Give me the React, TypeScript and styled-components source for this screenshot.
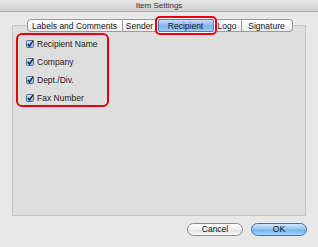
import styled, { createGlobalStyle } from "styled-components";

const GlobalStyle = createGlobalStyle`
  html, body {
    margin: 0;
    padding: 0;
    background: #e8e8e8;
  }
  body {
    font-family: "Liberation Sans", Arial, sans-serif;
  }
`;

const tabs = [
  { label: "Labels and Comments", width: 96 },
  { label: "Sender", width: 35 },
  { label: "Recipient", width: 56 },
  { label: "Logo", width: 28 },
  { label: "Signature", width: 51 },
];
const fields = ["Recipient Name", "Company", "Dept./Div.", "Fax Number"];

const CheckIcon = () => (
  <svg width="8" height="8" viewBox="0 0 8 8">
    <defs>
      <linearGradient id="cb" x1="0" y1="0" x2="0" y2="1">
        <stop offset="0" stopColor="#d6e8fb" />
        <stop offset="1" stopColor="#7fb0e8" />
      </linearGradient>
    </defs>
    <rect x="0.5" y="0.5" width="7" height="7" rx="1" fill="url(#cb)" stroke="#4f73a8" />
    <path d="M1.7 3.9 L3.4 6 L7.2 0.6" fill="none" stroke="#14284a" strokeWidth="1.4" />
  </svg>
);

const App = () => {
  return (
    <>
      <GlobalStyle />
      <Window>
        <TitleBar>Item Settings</TitleBar>
        <Body>
          <TabRow>
            {tabs.map((t) => (
              <Tab key={t.label} $active={t.label === "Recipient"} style={{ width: t.width }}>
                {t.label}
              </Tab>
            ))}
          </TabRow>
          <GroupBox>
            <FieldList>
              {fields.map((f) => (
                <FieldRow key={f}>
                  <CheckIcon />
                  <span>{f}</span>
                </FieldRow>
              ))}
            </FieldList>
          </GroupBox>
          <Buttons>
            <Button>Cancel</Button>
            <Button $primary>OK</Button>
          </Buttons>
        </Body>
      </Window>
    </>
  );
};

const Window = styled.div`
  width: 318px;
  height: 247px;
  background: #e8e8e8;
  display: flex;
  flex-direction: column;
  overflow: hidden;
`;

const TitleBar = styled.div`
  height: 11px;
  line-height: 12px;
  text-align: center;
  font-size: 8px;
  color: #333;
  background: linear-gradient(#e6e6e6, #cfcfcf);
  border-bottom: 1px solid #a9a9a9;
`;

const Body = styled.div`
  padding: 7px 12px 0 12px;
  display: flex;
  flex-direction: column;
`;

const TabRow = styled.div`
  display: flex;
  justify-content: center;
  position: relative;
  z-index: 1;
  height: 13px;
  margin-left: 1px;
`;

const Tab = styled.div<{ $active?: boolean }>`
  box-sizing: border-box;
  height: 13px;
  line-height: 12px;
  text-align: center;
  font-size: 8.5px;
  color: #1a1a1a;
  border: 1px solid #9a9a9a;
  border-left: none;
  background: linear-gradient(#ffffff, #ececec);
  white-space: nowrap;
  &:first-child {
    border-left: 1px solid #9a9a9a;
    border-radius: 4px 0 0 4px;
  }
  &:last-child {
    border-radius: 0 4px 4px 0;
  }
  ${(p) =>
    p.$active &&
    `
    background: linear-gradient(#c7e1fb, #7ab4ef 55%, #9cccf6);
    border-color: #5a7fb0;
    border-left: 1px solid #5a7fb0;
    box-shadow: 0 0 0 1px #fff, 0 0 0 3px #e8000e;
    border-radius: 2px;
    position: relative;
  `}
`;

const GroupBox = styled.div`
  margin-top: -7px;
  height: 191px;
  background: #dedede;
  border: 1px solid #c4c4c4;
  padding: 7px 0 0 3px;
  box-sizing: border-box;
`;

const FieldList = styled.div`
  box-sizing: border-box;
  width: 93px;
  height: 74px;
  border: 2px solid #e5000f;
  border-radius: 6px;
  padding: 4px 0 0 8px;
  display: flex;
  flex-direction: column;
  gap: 9px;
`;

const FieldRow = styled.label`
  display: flex;
  align-items: center;
  gap: 3px;
  height: 9px;
  font-size: 8.5px;
  color: #1a1a1a;
  white-space: nowrap;
`;

const Buttons = styled.div`
  display: flex;
  justify-content: flex-end;
  gap: 8px;
  margin-top: 7px;
  margin-right: -1px;
`;

const Button = styled.div<{ $primary?: boolean }>`
  width: 54px;
  height: 11px;
  line-height: 11px;
  text-align: center;
  font-size: 8.5px;
  color: #111;
  border: 1px solid #7d7d7d;
  border-radius: 7px;
  background: ${(p) =>
    p.$primary
      ? "linear-gradient(#d3e8fc, #8cc2f3 50%, #6fb1ee 55%, #a9d6fb)"
      : "linear-gradient(#ffffff, #f0f0f0 50%, #e2e2e2 55%, #f6f6f6)"};
  border-color: ${(p) => (p.$primary ? "#4c6f9f" : "#8a8a8a")};
`;

export default App;
